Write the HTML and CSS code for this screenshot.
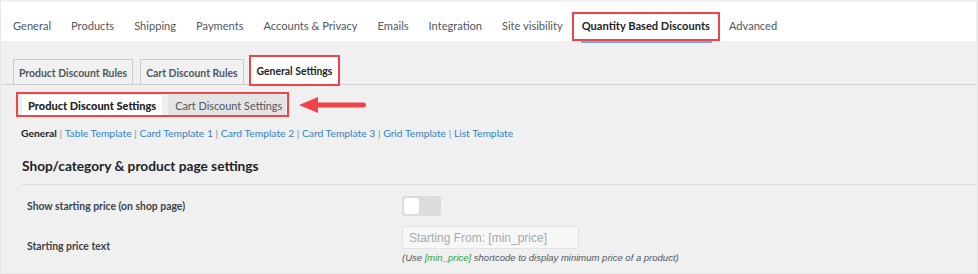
FILE: index.html
```html
<!DOCTYPE html>
<html lang="en">
<head>
    <meta charset="UTF-8">
    <title>Quantity Based Discounts - Settings</title>
    <link rel="stylesheet" href="styles.css">
</head>
<body>
<div class="frame">
    <!-- WooCommerce settings tabs -->
    <nav class="wc-tabs">
        <a class="wc-tab" href="#">General</a>
        <a class="wc-tab" href="#">Products</a>
        <a class="wc-tab" href="#">Shipping</a>
        <a class="wc-tab" href="#">Payments</a>
        <a class="wc-tab" href="#">Accounts &amp; Privacy</a>
        <a class="wc-tab" href="#">Emails</a>
        <a class="wc-tab" href="#">Integration</a>
        <a class="wc-tab" href="#">Site visibility</a>
        <a class="wc-tab is-active marked" href="#">Quantity Based Discounts</a>
        <a class="wc-tab" href="#">Advanced</a>
    </nav>

    <div class="content">
        <div class="nav-tabs">
            <a class="nav-tab" href="#">Product Discount Rules</a>
            <a class="nav-tab" href="#">Cart Discount Rules</a>
            <a class="nav-tab is-active" href="#">General Settings</a>
        </div>

        <div class="sub-row">
            <div class="sub-tabs">
                <a class="sub-tab is-active" href="#">Product Discount Settings</a>
                <a class="sub-tab" href="#">Cart Discount Settings</a>
            </div>
            <svg class="pointer" width="68" height="18" viewBox="0 0 68 18">
                <path d="M0 9 L19 1 L19 17 Z" fill="#f2434b"></path>
                <line x1="17" y1="9" x2="64.5" y2="9" stroke="#f2434b" stroke-width="5" stroke-linecap="round"></line>
            </svg>
        </div>

        <ul class="subsubsub">
            <li><a class="current" href="#">General</a> | </li>
            <li><a href="#">Table Template</a> | </li>
            <li><a href="#">Card Template 1</a> | </li>
            <li><a href="#">Card Template 2</a> | </li>
            <li><a href="#">Card Template 3</a> | </li>
            <li><a href="#">Grid Template</a> | </li>
            <li><a href="#">List Template</a></li>
        </ul>

        <h2 class="section-title">Shop/category &amp; product page settings</h2>

        <div class="form-table">
            <div class="form-row">
                <label class="form-label">Show starting price (on shop page)</label>
                <div class="form-field">
                    <span class="toggle"><span class="toggle-knob"></span></span>
                </div>
            </div>
            <div class="form-row form-row-text">
                <label class="form-label">Starting price text</label>
                <div class="form-field">
                    <input class="text-input" type="text" placeholder="Starting From: [min_price]">
                    <p class="help">(Use <span class="code">[min_price]</span> shortcode to display minimum price of a product)</p>
                </div>
            </div>
        </div>
    </div>
</div>
</body>
</html>
```

FILE: styles.css
```css
/* Reset page CSS */
* {
    margin: 0;
    padding: 0;
    box-sizing: border-box;
}

body {
    width: 978px;
    height: 274px;
    background-color: #e6e6e6;
    font-family: Lato, "Open Sans", sans-serif;
    color: #3c434a;
    overflow: hidden;
}

.frame {
    height: 273px;
    margin-left: 1px;
    margin-right: 1px;
    padding-top: 2px;
    background-color: #f0f0f0;
}

/* Top WooCommerce tabs */
.wc-tabs {
    display: flex;
    align-items: flex-end;
    height: 39px;
    padding-left: 2px;
    background-color: #ffffff;
    margin-right: 1px;
}

.wc-tab {
    position: relative;
    display: block;
    padding: 1px 8px 2px;
    border: 2px solid transparent;
    line-height: 22px;
    font-size: 11.1px;
    color: #50575e;
    text-decoration: none;
    white-space: nowrap;
}

.wc-tab.is-active {
    color: #1d2327;
    font-weight: 700;
}

.wc-tab.marked {
    border-color: #f2434b;
    margin-left: -1px;
    margin-right: -1px;
}

.wc-tab.is-active::after {
    content: "";
    position: absolute;
    left: 7px;
    right: 6px;
    bottom: -4px;
    height: 2px;
    background-color: #72aee6;
}

/* Plugin tabs */
.content {
    padding: 0 1px 0 12px;
}

.nav-tabs {
    display: flex;
    align-items: flex-end;
    gap: 7px;
    height: 44px;
    border-bottom: 1px solid #d2d2d2;
    margin-left: -11px;
    padding-left: 11px;
}

.nav-tab {
    display: block;
    height: 26px;
    margin-bottom: -1px;
    padding: 2px 5px 0;
    border: 1px solid #cccccc;
    background-color: #f1f1f1;
    line-height: 22px;
    font-size: 10.4px;
    font-weight: 700;
    color: #50575e;
    text-decoration: none;
    white-space: nowrap;
}

.nav-tab.is-active {
    height: 31px;
    margin-left: -2px;
    margin-bottom: -2px;
    padding: 2px 6px 0;
    border: 2px solid #f2434b;
    background-color: #ffffff;
    line-height: 25px;
    color: #1d2327;
}

/* Discount settings switch */
.sub-row {
    display: flex;
    align-items: center;
    gap: 10px;
    margin-top: 7px;
    margin-left: 3px;
}

.sub-tabs {
    display: flex;
    gap: 6px;
    padding: 1px 1px 0 4px;
    border: 2px solid #f2434b;
}

.sub-tab {
    display: block;
    height: 20px;
    padding: 2px 4px 0 7px;
    line-height: 18px;
    font-size: 10.9px;
    color: #50575e;
    background-color: #e4e4e4;
    text-decoration: none;
    white-space: nowrap;
}

.sub-tab.is-active {
    padding: 2px 6px 0;
    background-color: #ffffff;
    color: #1d2327;
    font-size: 11px;
    font-weight: 900;
}

.pointer {
    display: block;
}

/* Template links */
.subsubsub {
    display: flex;
    list-style: none;
    margin: 7px 0 0 8px;
    padding-top: 1px;
    font-size: 10.3px;
    line-height: 17px;
    color: #8c8f94;
    white-space: pre;
}

.subsubsub a {
    color: #3582c4;
    text-decoration: none;
}

.subsubsub a.current {
    color: #1d2327;
    font-weight: 700;
}

.section-title {
    margin: 14px 0 0 9px;
    padding-bottom: 8px;
    border-bottom: 1px solid #dcdcdc;
    font-size: 13.7px;
    font-weight: 700;
    line-height: 20px;
    color: #1d2327;
}

.form-table {
    margin-left: 8px;
}

.form-row {
    display: flex;
    align-items: center;
    height: 41px;
    padding-left: 6px;
}

.form-row-text {
    align-items: flex-start;
}

.form-label {
    width: 375px;
    padding-top: 1px;
    font-size: 10.4px;
    font-weight: 700;
    line-height: 15px;
    color: #3c434a;
}

.form-row-text .form-label {
    margin-top: 12px;
}

.toggle {
    display: block;
    width: 39px;
    height: 20px;
    padding: 2px;
    border-radius: 3px;
    background-color: #dcdcdc;
}

.toggle-knob {
    display: block;
    width: 15px;
    height: 16px;
    border-radius: 3px;
    background-color: #ffffff;
}

.text-input {
    display: block;
    width: 177px;
    height: 23px;
    padding: 0 6px;
    border: 1px solid #e3e3e3;
    border-radius: 3px;
    background-color: #f7f7f7;
    font-family: "Liberation Sans", Arial, sans-serif;
    font-size: 12px;
    color: #3c434a;
}

.text-input::placeholder {
    color: #a7aaad;
}

.help {
    margin-top: 2px;
    font-family: "Liberation Sans", Arial, sans-serif;
    font-size: 9.5px;
    font-style: italic;
    line-height: 13px;
    color: #50575e;
}

.help .code {
    color: #2e9e3e;
}
```
